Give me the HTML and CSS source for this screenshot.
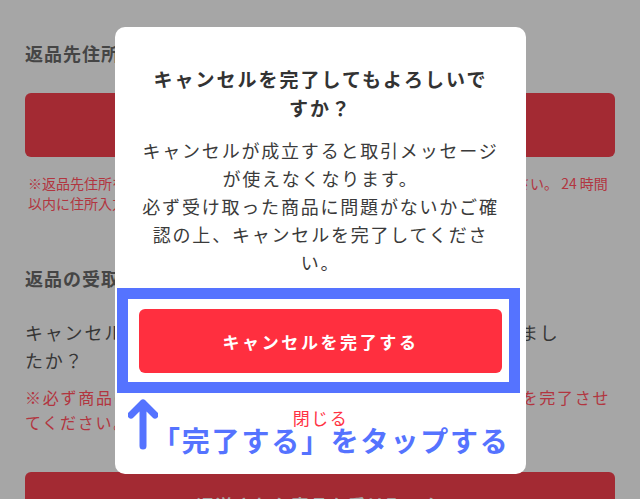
FILE: index.html
```html
<!DOCTYPE html>
<html lang="ja">
<head>
<meta charset="utf-8">
<link rel="stylesheet" href="styles.css">
</head>
<body>
<div class="page">
  <h2 class="heading">返品先住所の登録</h2>
  <div class="dim-btn"></div>
  <p class="note-small">
    <span class="line">※返品先住所を入力して、キャンセル申請後に出品者へ送付先を連絡してください。 24 時間</span>
    <span class="line">以内に住所入力がない場合は自動でキャンセルされます。</span>
  </p>
  <h2 class="heading heading-2">返品の受取確認</h2>
  <p class="question">
    <span class="line">キャンセルが成立しました。返送された商品を受け取りまし</span>
    <span class="line">たか？</span>
  </p>
  <p class="note-large">
    <span class="line">※必ず商品の中身を確認してから、受け取り評価を行い、取引を完了させ</span>
    <span class="line">てください。</span>
  </p>
  <div class="dim-btn dim-btn-bottom">返送された商品を受け取った</div>
</div>

<div class="modal">
  <h1 class="modal-title">キャンセルを完了してもよろしいで<br>すか？</h1>
  <p class="modal-body">
    キャンセルが成立すると取引メッセージ<br>
    が使えなくなります。<br>
    必ず受け取った商品に問題がないかご確<br>
    認の上、キャンセルを完了してくださ<br>
    い。
  </p>
  <button class="modal-primary">キャンセルを完了する</button>
  <div class="modal-close">閉じる</div>
</div>

<div class="highlight"></div>
<svg class="arrow" width="30" height="52" viewBox="0 0 30 52">
  <path d="M15 48 V5 M3 17 L15 5 L27 17" fill="none" stroke="#5573ff" stroke-width="7" stroke-linecap="round" stroke-linejoin="round"/>
</svg>
<div class="caption">「完了する」をタップする</div>
</body>
</html>
```

FILE: styles.css
```css
* { box-sizing: border-box; }
html, body {
  margin: 0;
  padding: 0;
  background: #a6a6a6;
  width: 640px;
  height: 499px;
  overflow: hidden;
  font-family: "Noto Sans CJK JP", "Noto Sans", sans-serif;
}
.page {
  padding: 40px 25px 0;
}
.heading {
  margin: 0;
  font-size: 18px;
  line-height: 26px;
  font-weight: 700;
  color: #454545;
  letter-spacing: 1px;
}
.heading-2 { margin-top: 52px; }
.line { display: block; white-space: nowrap; }
.dim-btn {
  margin-top: 27px;
  height: 64px;
  border-radius: 6px;
  background: #a32a33;
  color: #a6a6a6;
  font-size: 17px;
  font-weight: 700;
  letter-spacing: 2px;
  display: flex;
  align-items: center;
  justify-content: center;
}
.dim-btn-bottom { margin-top: 37px; }
.note-small {
  margin: 16px 0 0 3px;
  font-size: 14px;
  line-height: 20px;
  color: #b2353f;
}
.question {
  margin: 27px 0 0;
  font-size: 18px;
  line-height: 28px;
  color: #363636;
  letter-spacing: 1.8px;
}
.note-large {
  margin: 11px 0 0;
  font-size: 16px;
  line-height: 25px;
  color: #b2353f;
  letter-spacing: 1.75px;
}

.modal {
  position: absolute;
  left: 115px;
  top: 27px;
  width: 411px;
  height: 447px;
  background: #fff;
  border-radius: 10px;
  padding: 37px 24px 0;
  display: flex;
  flex-direction: column;
  align-items: center;
  text-align: center;
}
.modal-title {
  margin: 0;
  font-size: 19px;
  line-height: 29px;
  font-weight: 700;
  color: #333;
  letter-spacing: 2px;
  white-space: nowrap;
}
.modal-body {
  margin: 14px 0 0;
  font-size: 18px;
  line-height: 28px;
  color: #3a3a3a;
  letter-spacing: 1.8px;
  white-space: nowrap;
}
.modal-primary {
  margin-top: 33px;
  width: 363px;
  height: 64px;
  border: 0;
  border-radius: 6px;
  background: #ff2f3f;
  color: #fff;
  font-family: inherit;
  font-size: 17px;
  font-weight: 700;
  letter-spacing: 2.6px;
}
.modal-close {
  margin-top: 33px;
  font-size: 17px;
  line-height: 24px;
  color: #ff3344;
  letter-spacing: 1.5px;
}

.highlight {
  position: absolute;
  left: 117px;
  top: 288px;
  width: 403px;
  height: 105px;
  border: 11px solid #5573ff;
}
.arrow {
  position: absolute;
  left: 128px;
  top: 398px;
}
.caption {
  position: absolute;
  left: 152px;
  top: 421px;
  font-size: 28px;
  line-height: 38px;
  font-weight: 700;
  color: #5573ff;
  letter-spacing: 1.8px;
  white-space: nowrap;
}
```
